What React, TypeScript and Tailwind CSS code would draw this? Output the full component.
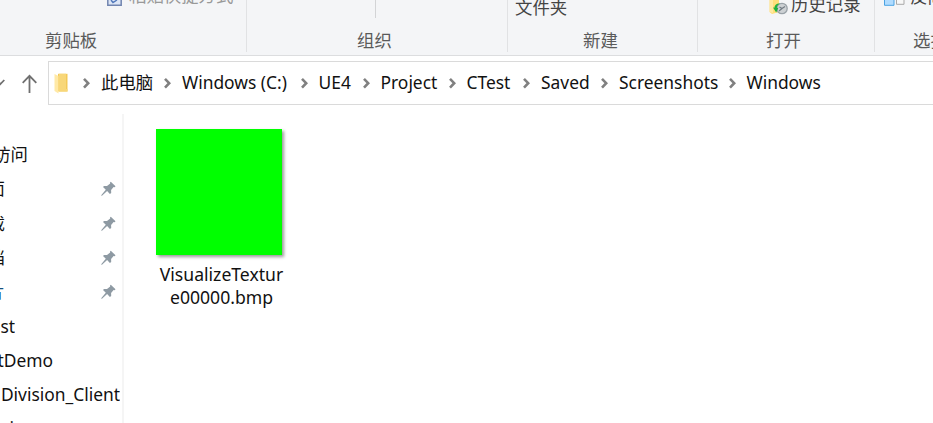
import React from 'react';

const crumbs = [
  { text: '此电脑', box: 'w-[81px]' },
  { text: 'Windows (C:)', box: 'w-[136.5px]' },
  { text: 'UE4', box: 'w-[62px]' },
  { text: 'Project', box: 'w-[86px]' },
  { text: 'CTest', box: 'w-[74.5px]' },
  { text: 'Saved', box: 'w-[78px]' },
  { text: 'Screenshots', box: 'w-[127.5px]' },
];

const rows = [
  { text: '快速访问', width: 'w-[28px]', pin: false, color: '' },
  { text: '桌面', width: 'w-[5px]', pin: true, color: '' },
  { text: '下载', width: 'w-[5px]', pin: true, color: '' },
  { text: '文档', width: 'w-[5px]', pin: true, color: '' },
  { text: '图片', width: 'w-[5px]', pin: true, color: 'text-[#164f7d]' },
  { text: 'CTest', width: 'w-[15px]', pin: false, color: '' },
  { text: 'tDemo', width: 'w-[53px]', pin: false, color: '' },
  { text: 'Division_Client', width: 'w-[120px]', pin: false, color: '' },
  { text: 'i', width: 'w-[14px]', pin: false, color: '' },
];

function Chevron({ className = '' }: { className?: string }) {
  return (
    <svg className={`shrink-0 ${className}`} width="8" height="12" viewBox="0 0 8 12" fill="none" stroke="#808080" strokeWidth="2.6">
      <path d="M1 1.8 5.2 6.2 1 10.6" />
    </svg>
  );
}

function Pin() {
  return (
    <svg className="shrink-0" width="15" height="16" viewBox="0 0 15 16">
      <path d="M9.8.8 14.5 5.2 13.7 6.2 12.6 6 10.1 9 10.2 12 8.9 12.9 6.1 10.1 1 14.8.3 14.7.4 14 4.8 8.8 2 6.1 3 4.9 6 5 9.2 2.4 9 1.4Z" fill="#8e9aa3" />
    </svg>
  );
}

function Group({ width, label, labelClass, children }: { width: string; label: string; labelClass: string; children?: React.ReactNode }) {
  return (
    <div className={`${width} flex h-[52px] shrink-0 flex-col overflow-hidden border-r border-[#e1e2e4]`}>
      <div className="h-[28px] shrink-0 overflow-hidden">{children}</div>
      <div className={`shrink-0 whitespace-nowrap leading-[25px] text-[#5a5a5a] ${labelClass}`}>{label}</div>
    </div>
  );
}

export default function App() {
  return (
    <div className="flex h-[423px] w-[933px] flex-col overflow-hidden bg-white font-['Noto_Sans','Noto_Sans_CJK_SC',sans-serif] text-[17.4px] text-[#111]">
      <header className="flex h-[56px] shrink-0 overflow-hidden border-b border-[#dcdddf] bg-[#f4f5f7]">
        <Group width="w-[247px]" label="剪贴板" labelClass="pl-[45px]">
          <div className="flex pl-[107px]">
            <svg className="shrink-0" width="15" height="6" viewBox="0 0 15 6">
              <path d="M.8-3V5.2H14.2V-3" fill="#dce5f5" stroke="#7185b0" strokeWidth="1.5" />
              <path d="M4 0 6 2.5 10 0" fill="none" stroke="#5279bb" strokeWidth="1.4" />
            </svg>
            <span className="-mt-[17px] ml-[7px] whitespace-nowrap leading-[24px] text-[#999]">粘贴快捷方式</span>
          </div>
        </Group>
        <Group width="w-[261px]" label="组织" labelClass="pl-[110px]">
          <div className="ml-[128px] h-[18px] w-px bg-[#d3d4d6]" />
        </Group>
        <Group width="w-[190px]" label="新建" labelClass="pl-[75px]">
          <div className="-mt-[5px] pl-[7px] leading-[25px] text-[#444]">文件夹</div>
        </Group>
        <Group width="w-[177px]" label="打开" labelClass="pl-[68px]">
          <div className="flex pl-[71px]">
            <svg className="shrink-0" width="19" height="16" viewBox="0 0 19 16">
              <path d="M.5 0H10V12L3 14 .5 12Z" fill="#ffdf79" />
              <path d="M1 0H4V13L1 12Z" fill="#ffe9a2" />
              <circle cx="13" cy="8.5" r="5.2" fill="#cdd1d4" stroke="#9aa2a8" strokeWidth="1.3" />
              <path d="m10 11 3-2.5 3-2M13 8.5 10.5 7" fill="none" stroke="#727b83" strokeWidth="1.2" />
              <path d="M4 7.5 7.2 12.5 9.4 7.8 7.8 8C8 6 9 4.3 11.3 3.5 7.5 3 5.7 5 5.4 7.7Z" fill="#20b13d" />
            </svg>
            <span className="-mt-[8px] ml-[3px] whitespace-nowrap leading-[25px] text-[#444]">历史记录</span>
          </div>
        </Group>
        <Group width="w-[90px]" label="选择" labelClass="pl-[38px]">
          <div className="flex pl-[9px]">
            <svg className="shrink-0" width="21" height="6" viewBox="0 0 21 6">
              <path d="M.5-3V5.3H10V-3" fill="#b1dcff" stroke="#4ba3e3" />
              <path d="M12.5-3V4.3H20V-3" fill="#f8f8f8" stroke="#a9a9a9" />
            </svg>
            <span className="-mt-[16px] ml-[5px] whitespace-nowrap leading-[25px] text-[#444]">反向选择</span>
          </div>
        </Group>
      </header>

      <nav className="flex h-[49px] shrink-0 pt-[5px]">
        <div className="flex w-[48px] shrink-0 items-center">
          <svg width="42" height="24" viewBox="0 0 42 24" fill="none" stroke="#707070" strokeWidth="1.8">
            <path d="M-3 9 .3 13.2 4.3 9" />
            <path d="M29.5 22V5M22.7 11.8 29.5 4.8 36.3 11.8" />
          </svg>
        </div>
        <div className="flex w-[900px] shrink-0 items-center border border-[#dadada] pl-[5px]">
          <svg className="shrink-0" width="15" height="21" viewBox="0 0 15 21">
            <path d="M4 .8H13.5V18.5H4Z" fill="#f3c958" />
            <path d="M5 .8H12V16H13.5V18.5H5Z" fill="#f8d779" />
            <path d="M.5 1 4.5 3V20.5L.5 18Z" fill="#ffe9a6" />
          </svg>
          <Chevron className="ml-[14px] mr-[10px]" />
          {crumbs.map((c) => (
            <div key={c.text} className={`${c.box} flex shrink-0 items-center justify-between whitespace-nowrap`}>
              <span className="pb-[2px]">{c.text}</span>
              <Chevron className="mr-[10px]" />
            </div>
          ))}
          <span className="pb-[2px]">Windows</span>
        </div>
      </nav>

      <main className="flex min-h-0 flex-1 pt-[9px]">
        <aside className="w-[124px] shrink-0 overflow-hidden border-r-2 border-[#f5f5f5] pt-[24px]">
          {rows.map((r) => (
            <div key={r.text} className="flex h-[34.3px] items-center justify-between pr-[6px]">
              <div className={`${r.width} ${r.color} flex shrink-0 justify-end overflow-hidden whitespace-nowrap pb-[2px]`}>
                <span>{r.text}</span>
              </div>
              {r.pin && <Pin />}
            </div>
          ))}
        </aside>
        <section className="ml-[32px] mt-[15px] flex w-[131px] flex-col">
          <div className="h-[126px] w-[126px] shrink-0 bg-[#00ff00] shadow-[2px_2px_3px_rgba(0,0,0,0.4)]" />
          <div className="mt-[8px] text-center text-[17.6px] leading-[23px]">
            VisualizeTextur
            <br />
            e00000.bmp
          </div>
        </section>
      </main>
    </div>
  );
}
